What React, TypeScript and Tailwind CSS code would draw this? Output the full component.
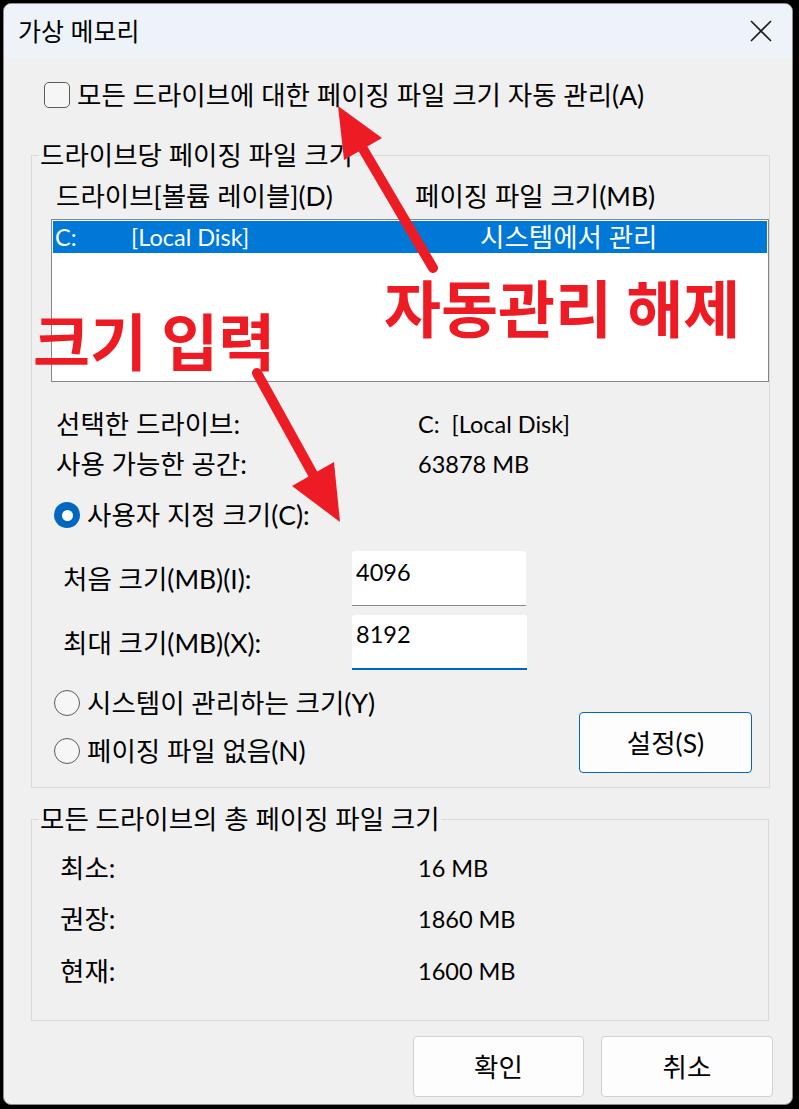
import React from "react";

function Radio({ checked }: { checked?: boolean }) {
  if (checked) {
    return (
      <span className="w-[26px] h-[26px] rounded-full bg-[#0067c0] flex items-center justify-center shrink-0">
        <span className="w-[11px] h-[11px] rounded-full bg-white" />
      </span>
    );
  }
  return <span className="w-[26px] h-[26px] rounded-full border-[1.5px] border-[#5c5c5c] bg-[#f6f6f6] shrink-0" />;
}

// latin-only values are set a bit smaller so they keep the Segoe-like width
const latin = "text-[23.5px]";

function App() {
  return (
    <div className="relative w-[799px] h-[1109px] bg-black pt-[3px] pl-[3px] pr-[6px] pb-[4px] font-[family-name:'Lato','Noto_Sans_CJK_KR',sans-serif] text-[26.5px] leading-[32px] text-black">
      <div className="h-full flex flex-col rounded-[8px] border border-[#8c8c8c] bg-[#f0f0f0] overflow-hidden">
        {/* title bar */}
        <div className="h-[54px] shrink-0 flex items-center justify-between pl-[14px] pr-[20px] bg-[#eef3f9]">
          <span className="text-[25px]">가상 메모리</span>
          <svg width="22" height="22" viewBox="0 0 22 22">
            <path d="M1 1 L21 21 M21 1 L1 21" stroke="#1a1a1a" strokeWidth="1.6" />
          </svg>
        </div>

        {/* auto manage */}
        <div className="mt-[21px] ml-[40px] flex items-center gap-[7px]">
          <span className="w-[26px] h-[26px] rounded-[5px] border-[1.5px] border-[#5c5c5c] bg-[#f6f6f6]" />
          <span>모든 드라이브에 대한 페이징 파일 크기 자동 관리(A)</span>
        </div>

        <fieldset className="mt-[28px] ml-[27px] w-[738px] border border-[#dadada] pb-[14px]">
          <legend className="ml-[7px] px-[1px]">드라이브당 페이징 파일 크기</legend>
          <div className="mt-[9px] pl-[24px] flex">
            <span className="w-[359px]">드라이브[볼륨 레이블](D)</span>
            <span>페이징 파일 크기(MB)</span>
          </div>
          <div className="mt-[7px] ml-[19px] w-[718px] h-[163px] border border-[#828790] bg-white p-px">
            <div className="h-[32px] bg-[#0078d7] text-white flex pl-[2px]">
              <span className={`w-[76px] ${latin}`}>C:</span>
              <span className={`w-[349px] ${latin}`}>[Local Disk]</span>
              <span>시스템에서 관리</span>
            </div>
          </div>
          <div className="mt-[26px] pl-[24px] flex">
            <span className="w-[362px]">선택한 드라이브:</span>
            <span className={latin}>C:&nbsp;&nbsp;[Local Disk]</span>
          </div>
          <div className="mt-[8px] pl-[24px] flex">
            <span className="w-[362px]">사용 가능한 공간:</span>
            <span className={latin}>63878 MB</span>
          </div>
          <div className="mt-[19px] ml-[22px] flex items-center gap-[7px]">
            <Radio checked />
            <span>사용자 지정 크기(C):</span>
          </div>
          <div className="mt-[20px] pl-[31px] flex items-center">
            <span className="w-[289px]">처음 크기(MB)(I):</span>
            <div className={`w-[174px] h-[55px] bg-white rounded-t-[3px] border-b border-[#8a8a8a] pl-[4px] pt-[5px] ${latin}`}>4096</div>
          </div>
          <div className="mt-[9px] pl-[31px] flex items-center">
            <span className="w-[289px]">최대 크기(MB)(X):</span>
            <div className={`w-[175px] h-[55px] bg-white rounded-t-[3px] border-b-2 border-[#0067c0] pl-[4px] pt-[3px] ${latin}`}>8192</div>
          </div>
          <div className="mt-[17px] flex items-start">
            <div className="ml-[22px] flex flex-col gap-[16px]">
              <div className="flex items-center gap-[7px]">
                <Radio />
                <span>시스템이 관리하는 크기(Y)</span>
              </div>
              <div className="flex items-center gap-[7px]">
                <Radio />
                <span>페이징 파일 없음(N)</span>
              </div>
            </div>
            <button className="ml-auto mr-[17px] mt-[25px] w-[173px] h-[61px] border border-[#0067c0] rounded-[4px] bg-[#fdfdfd]">
              설정(S)
            </button>
          </div>
        </fieldset>

        <fieldset className="mt-[15px] ml-[27px] w-[738px] border border-[#dadada] pb-[33px]">
          <legend className="ml-[7px] px-[1px]">모든 드라이브의 총 페이징 파일 크기</legend>
          <div className="mt-[17px] pl-[28px] flex">
            <span className="w-[358px]">최소:</span>
            <span className={latin}>16 MB</span>
          </div>
          <div className="mt-[19px] pl-[28px] flex">
            <span className="w-[358px]">권장:</span>
            <span className={latin}>1860 MB</span>
          </div>
          <div className="mt-[20px] pl-[28px] flex">
            <span className="w-[358px]">현재:</span>
            <span className={latin}>1600 MB</span>
          </div>
        </fieldset>

        <div className="mt-[15px] flex justify-end gap-[17px] pr-[19px]">
          <button className="w-[171px] h-[61px] border border-[#d0d0d0] rounded-[4px] bg-[#fdfdfd]">확인</button>
          <button className="w-[172px] h-[61px] border border-[#d0d0d0] rounded-[4px] bg-[#fdfdfd]">취소</button>
        </div>
      </div>

      {/* red annotations drawn over the dialog */}
      <svg className="absolute inset-0 pointer-events-none" width="799" height="1109">
        <line x1="433" y1="268" x2="356" y2="137" stroke="#ed1c24" strokeWidth="10" strokeLinecap="round" />
        <polygon points="338,106 382,138 344,160" fill="#ed1c24" />
        <line x1="257" y1="373" x2="320" y2="487" stroke="#ed1c24" strokeWidth="10" strokeLinecap="round" />
        <polygon points="340,522 334,462 292,486" fill="#ed1c24" />
      </svg>
      <span className="absolute left-[384px] top-[275px] text-[62px] leading-none font-bold text-[#ed1c24] font-[family-name:'Noto_Sans_CJK_KR',sans-serif] whitespace-nowrap">
        자동관리 해제
      </span>
      <span className="absolute left-[33px] top-[308px] text-[62px] leading-none font-bold text-[#ed1c24] font-[family-name:'Noto_Sans_CJK_KR',sans-serif] whitespace-nowrap">
        크기 입력
      </span>
    </div>
  );
}

export default App;
